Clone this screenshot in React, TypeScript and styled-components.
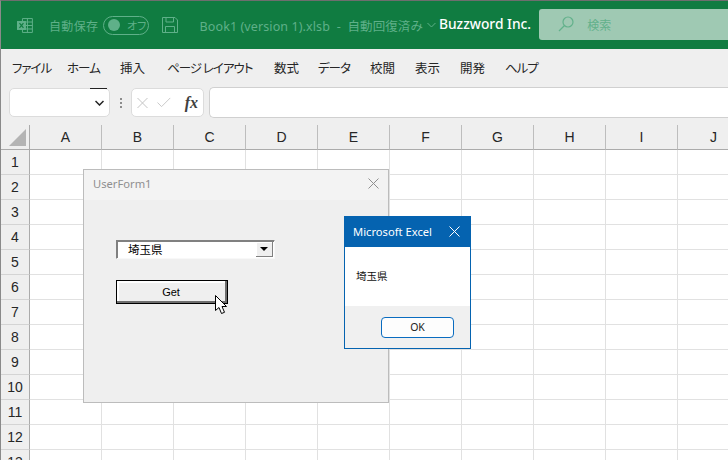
import React from 'react';
import styled, { createGlobalStyle } from 'styled-components';

const GlobalStyle = createGlobalStyle`
  html, body {
    margin: 0;
    padding: 0;
    width: 728px;
    height: 460px;
    overflow: hidden;
    background: #fff;
  }
  * { box-sizing: border-box; }
`;

const jp = `'Noto Sans CJK JP', 'Noto Sans', sans-serif`;
const ui = `'Noto Sans', 'Noto Sans CJK JP', sans-serif`;

const Window = styled.div`
  position: relative;
  width: 728px;
  height: 460px;
  overflow: hidden;
  border-left: 1px solid #8a8a8a;
  border-top: 1px solid #6e6e6e;
  font-family: ${jp};
  font-feature-settings: 'palt';
`;

const TitleBar = styled.div`
  height: 48px;
  background: #107c41;
  display: flex;
  align-items: center;
  padding-left: 16px;
  color: #5fb089;
  font-size: 12px;
  white-space: nowrap;
`;

const AutoSave = styled.span`
  margin-left: 15px;
  width: 47px;
  letter-spacing: 0.4px;
`;

const Toggle = styled.div`
  margin-left: 7px;
  width: 46px;
  height: 19px;
  border: 1px solid #5fb089;
  border-radius: 10px;
  display: flex;
  align-items: center;
  gap: 7px;
  padding-left: 4px;
  font-size: 11px;
  color: #5fb089;
`;

const Knob = styled.span`
  width: 12px;
  height: 12px;
  border-radius: 50%;
  background: #5fb089;
`;

const SaveSlot = styled.span`
  margin-left: 13px;
  display: flex;
`;

const DocName = styled.span`
  margin-left: 22px;
  width: 229px;
  font-family: ${ui};
  font-size: 12.5px;
  letter-spacing: 0.1px;
`;

const Company = styled.span`
  margin-left: 3px;
  width: 101px;
  color: #fff;
  font-family: ${ui};
  font-size: 13.8px;
  font-weight: 500;
  margin-top: -4px;
`;

const SearchBox = styled.div`
  width: 190px;
  height: 31px;
  margin-top: -2px;
  background: #9fc9b3;
  border-radius: 3px 0 0 3px;
  display: flex;
  align-items: center;
  gap: 13px;
  padding-left: 19px;
  color: #62b18b;
  font-size: 12px;
`;

const MenuBar = styled.nav`
  height: 38px;
  background: #efefef;
  display: flex;
  align-items: center;
  padding: 0 0 2px 11px;
  font-size: 12.5px;
  color: #262626;
`;

const MenuItem = styled.span<{ $w: number; $kana: boolean }>`
  width: ${({ $w }) => $w}px;
  white-space: nowrap;
  letter-spacing: ${({ $kana }) => ($kana ? '-1px' : '0')};
`;

const FormulaBar = styled.div`
  height: 38px;
  background: #efefef;
  display: flex;
  padding: 1px 0 8px 8px;
`;

const Field = styled.div<{ $w: number }>`
  position: relative;
  width: ${({ $w }) => $w}px;
  background: #fff;
  border: 1px solid #dcdcdc;
  border-radius: 5px;
  display: flex;
  align-items: center;
  justify-content: flex-end;
  padding: 0 5px;
`;

const ToolField = styled(Field)`
  justify-content: flex-start;
  padding: 0 5px;
  gap: 9px;
`;

const FormulaInput = styled.div`
  flex: 1;
  margin: -1px 0 -1px 5px;
  background: #fff;
  border: 1px solid #d0d0d0;
  border-right: 0;
  border-radius: 5px 0 0 5px;
`;

const NameMark = styled.span`
  position: absolute;
  top: -1px;
  right: 2px;
  width: 17px;
  height: 1px;
  background: #222;
`;

const Dots = styled.div`
  width: 21px;
  display: flex;
  flex-direction: column;
  align-items: center;
  justify-content: center;
  gap: 2px;
  & > span {
    width: 2px;
    height: 2px;
    background: #8c8c8c;
  }
`;

const Fx = styled.span`
  margin-left: 5px;
  font-family: 'Liberation Serif', serif;
  font-style: italic;
  font-weight: 700;
  font-size: 16px;
  color: #404040;
`;

const Sheet = styled.div`
  display: grid;
  grid-template-columns: 29px repeat(10, 72px);
  grid-auto-rows: 25px;
  background: #fff;
`;

const Corner = styled.div`
  background: #efefef;
  border-right: 1px solid #ababab;
  border-bottom: 1px solid #ababab;
  display: flex;
  align-items: flex-end;
  justify-content: flex-end;
  padding: 0 3px 3px 0;
`;

const ColHead = styled.div`
  background: #efefef;
  border-right: 1px solid #bdbdbd;
  border-bottom: 1px solid #ababab;
  display: flex;
  align-items: center;
  justify-content: center;
  font-family: 'Liberation Sans', sans-serif;
  font-size: 14px;
  color: #262626;
`;

const RowHead = styled(ColHead)`
  border-right: 1px solid #ababab;
  border-bottom: 1px solid #d4d4d4;
`;

const Cell = styled.div`
  border-right: 1px solid #e1e1e1;
  border-bottom: 1px solid #e1e1e1;
`;

const UserForm = styled.div`
  position: absolute;
  left: 82px;
  top: 168px;
  width: 306px;
  height: 234px;
  background: #efefef;
  border: 1px solid #bcbcbc;
  display: flex;
  flex-direction: column;
`;

const FormTitle = styled.div`
  height: 30px;
  background: #f3f3f3;
  display: flex;
  align-items: center;
  justify-content: space-between;
  padding: 0 9px 3px 9px;
  font-family: ${ui};
  font-size: 11.2px;
  color: #8f8f8f;
`;

const FormBody = styled.div`
  flex: 1;
  padding: 40px 0 0 32px;
  display: flex;
  flex-direction: column;
  align-items: flex-start;
  gap: 21px;
`;

const Combo = styled.div`
  width: 159px;
  height: 19px;
  background: #fff;
  border-top: 1px solid #808080;
  border-left: 1px solid #808080;
  border-right: 1px solid #f8f8f8;
  border-bottom: 1px solid #f8f8f8;
  box-shadow: inset 1px 1px 0 #808080;
  display: flex;
  align-items: center;
  justify-content: space-between;
  padding: 1px 1px 1px 11px;
  font-size: 11.5px;
  line-height: 15px;
  color: #000;
`;

const ComboArrow = styled.div`
  width: 17px;
  height: 15px;
  background: #efefef;
  border-right: 1px solid #808080;
  border-bottom: 1px solid #808080;
  box-shadow: inset 1px 1px 0 #fff;
  display: flex;
  align-items: center;
  justify-content: center;
  &::after {
    content: '';
    border-left: 4px solid transparent;
    border-right: 4px solid transparent;
    border-top: 4px solid #000;
  }
`;

const GetButton = styled.div`
  width: 112px;
  height: 24px;
  background: #efefef;
  border: 1px solid #000;
  box-shadow: inset -2px -2px 0 #6e6e6e, inset 2px 2px 0 #fff;
  display: flex;
  align-items: center;
  justify-content: center;
  padding-right: 2px;
  font-family: 'Liberation Sans', sans-serif;
  font-size: 11px;
  color: #000;
`;

const MessageBox = styled.div`
  position: absolute;
  left: 343px;
  top: 215px;
  width: 127px;
  height: 133px;
  background: #fff;
  border: 1px solid #0563b0;
  display: flex;
  flex-direction: column;
`;

const MessageTitle = styled.div`
  height: 30px;
  background: #0563b0;
  color: #fff;
  display: flex;
  align-items: center;
  justify-content: space-between;
  padding: 0 10px 2px 8px;
  font-family: ${ui};
  font-size: 11.2px;
  white-space: nowrap;
`;

const MessageBody = styled.div`
  flex: 1;
  padding: 21px 0 0 11px;
  font-size: 10.5px;
  line-height: 15px;
  color: #111;
`;

const MessageFooter = styled.div`
  height: 42px;
  background: #f0f0f0;
  display: flex;
  align-items: center;
  justify-content: flex-end;
  padding: 0 16px 0 0;
`;

const OkButton = styled.div`
  width: 73px;
  height: 21px;
  background: #fdfdfd;
  border: 1px solid #0a6cc0;
  border-radius: 4px;
  display: flex;
  align-items: center;
  justify-content: center;
  font-family: ${ui};
  font-size: 10.5px;
  color: #222;
`;

const Pointer = styled.svg`
  position: absolute;
  left: 213px;
  top: 293px;
`;

const columns = ['A', 'B', 'C', 'D', 'E', 'F', 'G', 'H', 'I', 'J'];
const rows = Array.from({ length: 13 }, (_, i) => i + 1);
const menu: [string, number, boolean][] = [
  ['ファイル', 55, true], ['ホーム', 53, true], ['挿入', 47, false], ['ページ レイアウト', 107, true],
  ['数式', 44, false], ['データ', 52, true], ['校閲', 45, false], ['表示', 45, false],
  ['開発', 45, false], ['ヘルプ', 40, true],
];

const Close: React.FC<{ color: string; size?: number }> = ({ color, size = 11 }) => (
  <svg width={size} height={size} viewBox="0 0 11 11" fill="none" stroke={color} strokeWidth="1">
    <path d="M.5.5l10 10M10.5.5l-10 10" />
  </svg>
);

const ExcelIcon = () => (
  <svg width="17" height="17" viewBox="0 0 17 17" fill="none" stroke="#5fb089" strokeWidth="1">
    <path d="M5.500 1.500h10v14h-10zM5.500 5h10M5.500 8.500h10M5.500 12h10M10.500 1.500v14" />
    <rect x="0" y="4" width="9" height="9" fill="#5fb089" stroke="none" />
    <path d="M2.500 6l4 5M6.500 6l-4 5" stroke="#107c41" strokeWidth="1.2" />
  </svg>
);

const SaveIcon = () => (
  <svg width="16" height="16" viewBox="0 0 16 16" fill="none" stroke="#5fb089" strokeWidth="1">
    <path d="M.5.5h12.500l2.500 2.500v12.500H.5z" />
    <path d="M4 .5v4.500h7.500V.5M3.500 15.500V9.500h9v6" />
  </svg>
);

const Chevron: React.FC<{ color: string; width?: number }> = ({ color, width = 1 }) => (
  <svg width="9" height="6" viewBox="0 0 9 6" fill="none" stroke={color} strokeWidth={width}>
    <path d="M.5 1l4 4 4-4" />
  </svg>
);

const App: React.FC = () => (
  <>
    <GlobalStyle />
    <Window>
      <TitleBar>
        <ExcelIcon />
        <AutoSave>自動保存</AutoSave>
        <Toggle>
          <Knob />
          オフ
        </Toggle>
        <SaveSlot>
          <SaveIcon />
        </SaveSlot>
        <DocName>Book1 (version 1).xlsb&nbsp; -&nbsp; 自動回復済み</DocName>
        <Chevron color="#5fb089" />
        <Company>Buzzword Inc.</Company>
        <SearchBox>
          <svg width="16" height="16" viewBox="0 0 16 16" fill="none" stroke="#62b18b" strokeWidth="1.2">
            <circle cx="10" cy="6" r="5" />
            <path d="M6.500 9.500L1 15" />
          </svg>
          検索
        </SearchBox>
      </TitleBar>
      <MenuBar>
        {menu.map(([label, w, kana]) => (
          <MenuItem key={label} $w={w} $kana={kana}>{label}</MenuItem>
        ))}
      </MenuBar>
      <FormulaBar>
        <Field $w={101}>
          <NameMark />
          <Chevron color="#222" width={1.5} />
        </Field>
        <Dots><span /><span /><span /></Dots>
        <ToolField $w={73}>
          <Close color="#c4c4c4" size={12} />
          <svg width="15" height="11" viewBox="0 0 15 11" fill="none" stroke="#c4c4c4" strokeWidth="1">
            <path d="M.5 5.500l4.500 4.500 9.500-9.500" />
          </svg>
          <Fx>fx</Fx>
        </ToolField>
        <FormulaInput />
      </FormulaBar>
      <Sheet>
        <Corner>
          <svg width="17" height="17" viewBox="0 0 17 17">
            <path d="M17 0v17H0z" fill="#b4b4b4" />
          </svg>
        </Corner>
        {columns.map((c) => <ColHead key={c}>{c}</ColHead>)}
        {rows.map((r) => (
          <React.Fragment key={r}>
            <RowHead>{r}</RowHead>
            {columns.map((c) => <Cell key={c} />)}
          </React.Fragment>
        ))}
      </Sheet>
      <UserForm>
        <FormTitle>
          UserForm1
          <Close color="#8f8f8f" />
        </FormTitle>
        <FormBody>
          <Combo>
            埼玉県
            <ComboArrow />
          </Combo>
          <GetButton>Get</GetButton>
        </FormBody>
      </UserForm>
      <MessageBox>
        <MessageTitle>
          Microsoft Excel
          <Close color="#fff" />
        </MessageTitle>
        <MessageBody>埼玉県</MessageBody>
        <MessageFooter>
          <OkButton>OK</OkButton>
        </MessageFooter>
      </MessageBox>
      <Pointer width="14" height="22" viewBox="0 0 14 22">
        <path d="M1.500 1.500v15l3.500-3 2.500 6 3-1.200-2.500-5.800h4.500z" fill="#fff" stroke="#000" strokeWidth="1" />
      </Pointer>
    </Window>
  </>
);

export default App;
